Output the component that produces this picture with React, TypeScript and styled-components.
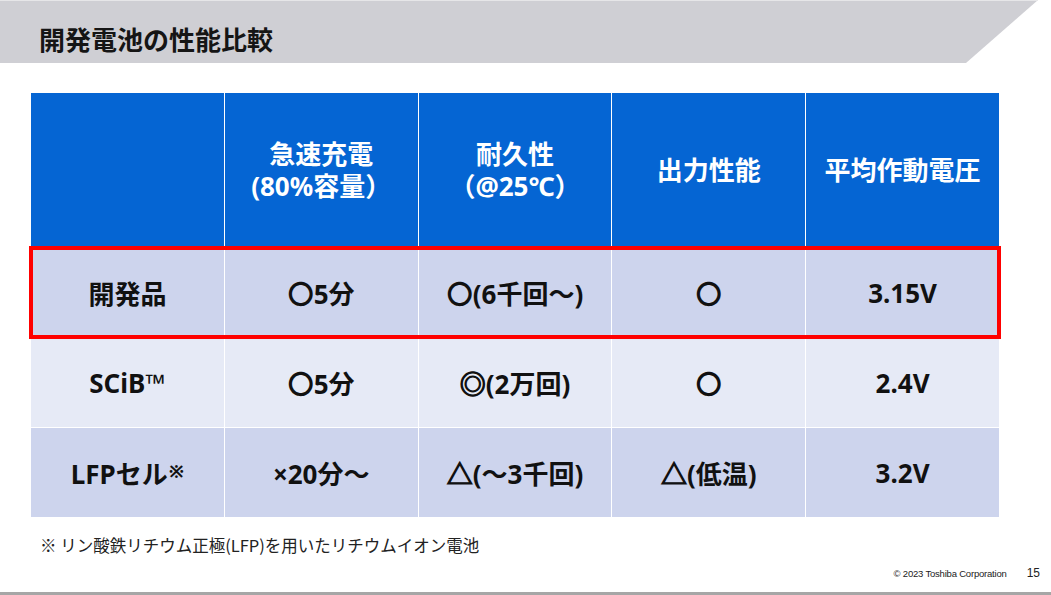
import styled, { createGlobalStyle } from 'styled-components';

const GlobalStyle = createGlobalStyle`
  html, body {
    margin: 0;
    padding: 0;
    background: #ffffff;
  }
  body {
    font-family: "Noto Sans", "Noto Sans CJK JP", sans-serif;
    color: #111111;
  }
`;

const Page = styled.div`
  width: 1051px;
  height: 595px;
  display: flex;
  flex-direction: column;
  overflow: hidden;
`;

const TitleBand = styled.div`
  height: 63px;
  box-sizing: border-box;
  border-top: 1px solid #e6e6e8;
  background: #cfcfd4;
  clip-path: polygon(0 0, 1038px 0, 966px 100%, 0 100%);
  display: flex;
  align-items: center;
  padding: 14px 0 0 39px;
`;

const Title = styled.h1`
  margin: 0;
  font-family: "Noto Sans CJK JP", sans-serif;
  font-size: 26px;
  font-weight: 700;
  color: #151515;
  line-height: 30px;
`;

const Table = styled.div`
  margin: 30px 0 0 31px;
  width: 968px;
  display: flex;
  flex-direction: column;
  gap: 1px;
  background: #ffffff;
`;

const HeadRow = styled.div`
  height: 154px;
  display: grid;
  grid-template-columns: repeat(5, 1fr);
  gap: 1px;
`;

const HeadCell = styled.div`
  background: #0565d3;
  color: #ffffff;
  font-size: 26px;
  font-weight: 700;
  line-height: 32px;
  display: flex;
  align-items: center;
  justify-content: center;
  text-align: center;
`;

const BodyRow = styled.div<{ $shade: 'dark' | 'light'; $highlight?: boolean }>`
  height: 89px;
  display: grid;
  grid-template-columns: repeat(5, 1fr);
  gap: 1px;
  position: relative;
  z-index: ${({ $highlight }) => ($highlight ? 1 : 0)};
  ${({ $highlight }) => $highlight && 'outline: 4px solid #ff0000; outline-offset: -2px;'}
  > div {
    background: ${({ $shade }) => ($shade === 'dark' ? '#cdd4ed' : '#e6eaf6')};
  }
`;

const BodyCell = styled.div`
  font-size: 26px;
  font-weight: 700;
  display: flex;
  align-items: center;
  justify-content: center;
  color: #111111;
`;

// thin CJK symbols (△ ◎) drawn heavier, as in the slide
const Sym = styled.span`
  -webkit-text-stroke: 1.2px #111111;
`;

const Mark = styled.sup`
  font-size: 18px;
  font-weight: 700;
  position: relative;
  top: -2px;
  margin-left: 1px;
`;

const Note = styled.p`
  margin: 16px 0 0 40px;
  font-family: "Noto Sans CJK JP", sans-serif;
  font-size: 16.5px;
  line-height: 24px;
  color: #222222;
`;

const Footer = styled.div`
  margin-top: auto;
  display: flex;
  justify-content: flex-end;
  align-items: baseline;
  gap: 20px;
  padding: 0 11px 12px 0;
`;

const Copyright = styled.span`
  font-family: "Liberation Sans", Arial, sans-serif;
  font-size: 9.5px;
  letter-spacing: -0.2px;
  color: #222222;
`;

const PageNo = styled.span`
  font-family: "Liberation Sans", Arial, sans-serif;
  font-size: 12px;
  color: #222222;
`;

const BottomRule = styled.div`
  height: 3px;
  background: #a6a6a6;
`;

type Row = {
  cells: React.ReactNode[];
  shade: 'dark' | 'light';
  highlight?: boolean;
};

const headers: React.ReactNode[] = [
  '',
  <>
    急速充電
    <br />
    (80%容量）
  </>,
  <>
    耐久性
    <br />
    （@25℃）
  </>,
  '出力性能',
  '平均作動電圧',
];

const rows: Row[] = [
  { cells: ['開発品', '〇5分', '〇(6千回～)', '〇', '3.15V'], shade: 'dark', highlight: true },
  {
    cells: [
      'SCiB™',
      '〇5分',
      <>
        <Sym>◎</Sym>(2万回)
      </>,
      '〇',
      '2.4V',
    ],
    shade: 'light',
  },
  {
    cells: [
      <>
        LFPセル<Mark>※</Mark>
      </>,
      '×20分～',
      <>
        <Sym>△</Sym>(～3千回)
      </>,
      <>
        <Sym>△</Sym>(低温)
      </>,
      '3.2V',
    ],
    shade: 'dark',
  },
];

export default function App() {
  return (
    <Page>
      <GlobalStyle />
      <TitleBand>
        <Title>開発電池の性能比較</Title>
      </TitleBand>

      <Table>
        <HeadRow>
          {headers.map((h, i) => (
            <HeadCell key={i}>{h}</HeadCell>
          ))}
        </HeadRow>
        {rows.map((row, i) => (
          <BodyRow key={i} $shade={row.shade} $highlight={row.highlight}>
            {row.cells.map((c, j) => (
              <BodyCell key={j}>{c}</BodyCell>
            ))}
          </BodyRow>
        ))}
      </Table>

      <Note>※ リン酸鉄リチウム正極(LFP)を用いたリチウムイオン電池</Note>

      <Footer>
        <Copyright>© 2023 Toshiba Corporation</Copyright>
        <PageNo>15</PageNo>
      </Footer>
      <BottomRule />
    </Page>
  );
}
